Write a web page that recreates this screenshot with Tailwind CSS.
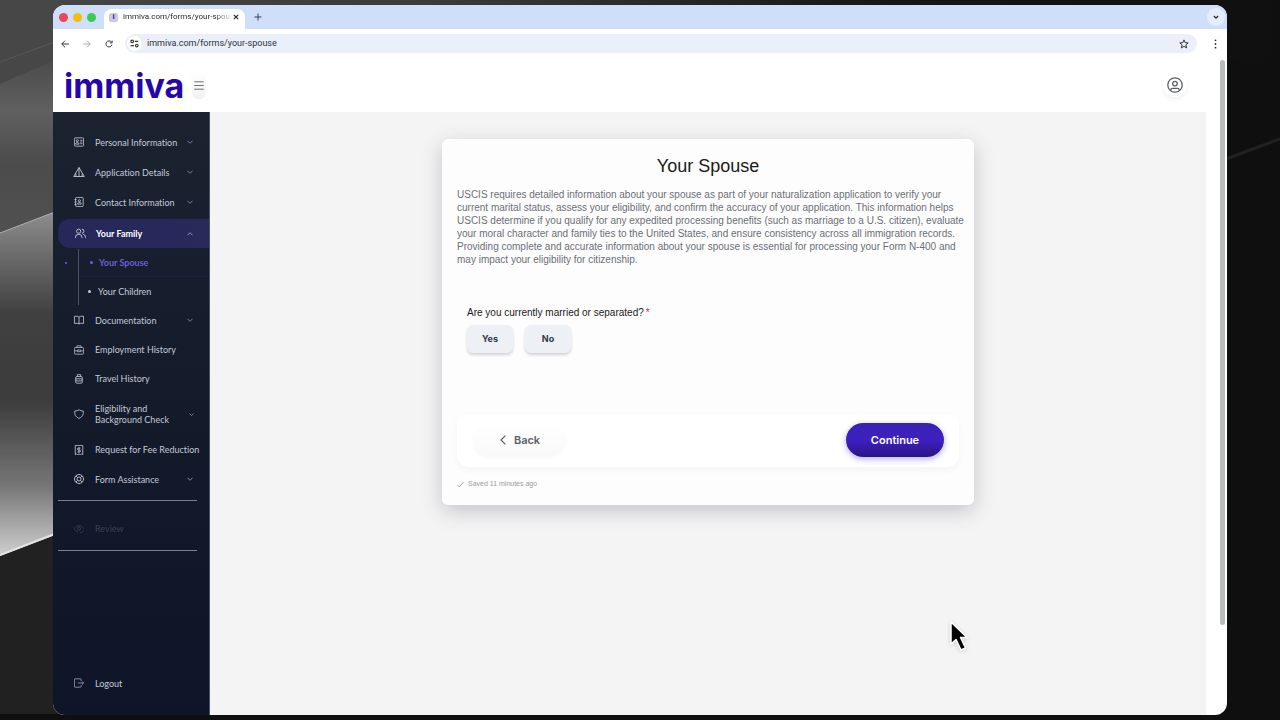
<!DOCTYPE html>
<html lang="en">
<head>
  <meta charset="UTF-8" />
  <meta name="viewport" content="width=device-width, initial-scale=1.0">
  <title>Your Spouse - immiva</title>
  <script src="https://cdn.jsdelivr.net/npm/@tailwindcss/browser@4"></script>
</head>
<body class="relative flex min-h-screen bg-[#0f0f0f] px-[53px] py-[5px] font-['Liberation_Sans',sans-serif]">
  <!-- Desktop wallpaper -->
  <svg class="absolute inset-0 h-full w-full" viewBox="0 0 1280 720" preserveAspectRatio="none" aria-hidden="true">
    <defs>
      <linearGradient id="wallTop" x1="0" y1="0" x2="1" y2="0">
        <stop offset="0" stop-color="#474747" />
        <stop offset="0.35" stop-color="#3a3a3a" />
        <stop offset="0.7" stop-color="#161616" />
        <stop offset="1" stop-color="#0f0f0f" />
      </linearGradient>
      <linearGradient id="wallUpper" x1="0" y1="0" x2="0" y2="1">
        <stop offset="0" stop-color="#4a4a4a" />
        <stop offset="0.3" stop-color="#606060" />
        <stop offset="0.6" stop-color="#4c4c4c" />
        <stop offset="1" stop-color="#505050" />
      </linearGradient>
      <linearGradient id="wallFold" x1="0" y1="0" x2="0" y2="1">
        <stop offset="0" stop-color="#8f8f8f" />
        <stop offset="0.12" stop-color="#6e6e6e" />
        <stop offset="0.3" stop-color="#404040" />
        <stop offset="0.55" stop-color="#3c3c3c" />
        <stop offset="0.8" stop-color="#777777" />
        <stop offset="1" stop-color="#cfcfcf" />
      </linearGradient>
    </defs>
    <rect width="1280" height="60" fill="url(#wallTop)" />
    <rect width="60" height="714" fill="#212121" />
    <path d="M0 0H60V60L0 85Z" fill="#474747" />
    <path d="M0 84L60 58V215L0 234Z" fill="url(#wallUpper)" />
    <path d="M0 233L60 210V533L0 556Z" fill="url(#wallFold)" />
    <path d="M0 62L60 40" stroke="#585858" stroke-width="1" />
    <path d="M0 233L60 210" stroke="#b0b0b0" stroke-width="1" />
    <path d="M0 555L60 532" stroke="#e4e4e4" stroke-width="2" />
    <path d="M1226 159L1280 139" stroke="#212121" stroke-width="3" />
  </svg>

  <!-- Browser window -->
  <div class="relative flex min-w-0 flex-1 flex-col overflow-hidden rounded-xl bg-white">
    <!-- Tab strip -->
    <div class="flex h-6 items-end bg-[#d0dff9] pr-[2px] pl-[6px]">
      <div class="flex h-6 items-center gap-[5px]">
        <span class="size-[9px] rounded-full bg-[#e8475c]"></span>
        <span class="size-[9px] rounded-full bg-[#f4bd12]"></span>
        <span class="size-[9px] rounded-full bg-[#3cc95a]"></span>
      </div>
      <div class="ml-2 flex h-5 w-[141px] items-center rounded-t-lg bg-white pr-[3px] pb-1 pl-[5px]">
        <span class="flex size-[9px] shrink-0 items-center justify-center rounded-xs bg-[#cfc4ee] text-[8px] font-bold text-[#2b1670]">i</span>
        <span class="ml-[5px] bg-linear-to-r from-[#222222] from-85% to-[#222222]/20 bg-clip-text font-['Roboto',sans-serif] text-[8px] whitespace-nowrap text-transparent">immiva.com/forms/your-spou</span>
        <button class="ml-auto flex size-3 items-center justify-center" aria-label="Close tab">
          <svg class="size-[6px]" viewBox="0 0 6 6" stroke="#222222" stroke-width="1.1"><path d="M.8 .8l4.400 4.400M5.200 .8L.8 5.200" /></svg>
        </button>
      </div>
      <button class="ml-[5px] flex h-6 w-4 items-center justify-center" aria-label="New tab">
        <svg class="size-2" viewBox="0 0 8 8" stroke="#33415c" stroke-width="1"><path d="M4 .5v7M.5 4h7" /></svg>
      </button>
      <button class="mb-[3px] ml-auto flex size-[18px] items-center justify-center rounded-full bg-[#e4edfd]" aria-label="Search tabs">
        <svg class="size-[6px]" viewBox="0 0 6 6" fill="none" stroke="#222222" stroke-width="1.2"><path d="M.8 2L3 4.200 5.200 2" /></svg>
      </button>
    </div>

    <!-- Address bar -->
    <div class="flex h-[29px] items-center pr-[6px] pl-[6px]">
      <button class="flex size-3 items-center justify-center" aria-label="Back">
        <svg class="size-2" viewBox="0 0 8 8" fill="none" stroke="#333333" stroke-width="1"><path d="M7.800 4H.9M4 .7L.7 4 4 7.300" /></svg>
      </button>
      <button class="ml-[10px] flex size-3 items-center justify-center" aria-label="Forward">
        <svg class="size-2" viewBox="0 0 8 8" fill="none" stroke="#aaaaaa" stroke-width="1"><path d="M.2 4h6.900M4 .7L7.300 4 4 7.300" /></svg>
      </button>
      <button class="ml-[10px] flex size-3 items-center justify-center" aria-label="Reload">
        <svg class="size-2" viewBox="0 0 9 9" fill="none" stroke="#333333" stroke-width="1.1"><path d="M7.800 5.200A3.400 3.400 0 1 1 7.300 2.500" /><path d="M8 .6v2.600H5.400" /></svg>
      </button>
      <div class="ml-[10px] flex h-[19px] flex-1 items-center rounded-full bg-[#eaeff9] pr-2 pl-[2px]">
        <span class="flex size-[15px] shrink-0 items-center justify-center rounded-full bg-white">
          <svg class="size-[9px]" viewBox="0 0 9 9" fill="none" stroke="#333333" stroke-width="1.1"><circle cx="2.200" cy="2.400" r="1.300" /><path d="M4.800 2.400h3.400M.6 6.600H4" /><circle cx="6.800" cy="6.600" r="1.300" /></svg>
        </span>
        <input type="text" aria-label="Address" value="immiva.com/forms/your-spouse" class="ml-[5px] min-w-0 flex-1 bg-transparent font-['Roboto',sans-serif] text-[9px] text-[#2e3138] outline-none">
        <button aria-label="Bookmark this page">
          <svg class="size-[10px]" viewBox="0 0 10 10" fill="none" stroke="#333333" stroke-width="1" stroke-linejoin="round"><path d="M5 .9l1.200 2.800 3 .2-2.300 2 .7 3L5 7.300 2.400 8.900l.7-3-2.300-2 3-.2z" /></svg>
        </button>
      </div>
      <button class="ml-3 flex h-4 w-3 items-center justify-center" aria-label="Browser menu">
        <svg class="h-[10px] w-[3px]" viewBox="0 0 3 10" fill="#333333"><circle cx="1.500" cy="1.300" r=".9" /><circle cx="1.500" cy="5" r=".9" /><circle cx="1.500" cy="8.700" r=".9" /></svg>
      </button>
    </div>

    <!-- Page -->
    <div class="relative flex flex-1 flex-col">
      <header class="flex h-[54px] items-center pr-10 pl-[11px]">
        <a href="#" class="w-[122px] pt-[2px] font-['Inter',sans-serif] text-[34px] leading-[52px] font-bold text-[#2406ac]">immiva</a>
        <button class="ml-[6px] flex h-7 w-[14px] items-center justify-center rounded-md bg-linear-to-b from-white to-[#f1f1f1]" aria-label="Toggle menu">
          <svg class="h-[9px] w-[10px]" viewBox="0 0 10 9" stroke="#6b6f6b" stroke-width="1"><path d="M.3 .8h9.400M.3 4.500h9.400M.3 8.200h9.400" /></svg>
        </button>
        <button class="ml-auto flex size-6 items-center justify-center rounded-full shadow-[0_3px_4px_rgba(0,0,0,0.05)]" aria-label="Account">
          <svg class="size-4" viewBox="0 0 16 16" fill="none" stroke="#5c5f66" stroke-width="1.300"><circle cx="8" cy="8" r="7.200" /><circle cx="8" cy="6.600" r="2.300" /><path d="M3.800 13.600v-.8a1.600 1.600 0 0 1 1.600-1.500h5.200a1.600 1.600 0 0 1 1.600 1.500v.8" /></svg>
        </button>
      </header>

      <div class="flex flex-1">
        <!-- Sidebar -->
        <aside class="flex w-[157px] shrink-0 flex-col border-r border-[#4a5064] bg-linear-to-b from-[#1b2331] via-[#131a2a] to-[#0f1528] pt-[15px] pb-[17px] font-['Lato',sans-serif] text-[9px] leading-[11px] text-[#c3c9d8] [font-variant-ligatures:none]">
          <nav class="flex flex-col" aria-label="Form sections">
            <button class="flex h-[30px] items-center pr-4 pl-[21px] text-left">
              <svg class="mr-[11px] size-[10px] shrink-0" viewBox="0 0 24 24" fill="none" stroke="currentColor" stroke-width="2"><rect x="1" y="2" width="22" height="20" rx="2" /><circle cx="8" cy="9" r="2.500" /><path d="M4 17c0-5 8-5 8 0zM15 8h5M15 12h5M15 16h5" /></svg>
              <span class="flex-1 whitespace-nowrap">Personal Information</span>
              <svg class="size-[6px] shrink-0" viewBox="0 0 6 6" fill="none" stroke="#8f97aa" stroke-width=".8"><path d="M.4 1.700L3 4.300l2.600-2.600" /></svg>
            </button>
            <button class="flex h-[30px] items-center pr-4 pl-[20px] text-left">
              <svg class="mr-[10px] size-3 shrink-0" viewBox="0 0 24 24" fill="none" stroke="currentColor" stroke-width="1.800" stroke-linejoin="round"><path d="M12 3L1.500 21h21zM12 3v18M6 21l-.5-6M18 21l.5-6" /></svg>
              <span class="flex-1 whitespace-nowrap">Application Details</span>
              <svg class="size-[6px] shrink-0" viewBox="0 0 6 6" fill="none" stroke="#8f97aa" stroke-width=".8"><path d="M.4 1.700L3 4.300l2.600-2.600" /></svg>
            </button>
            <button class="flex h-[30px] items-center pr-4 pl-[21px] text-left">
              <svg class="mr-[11px] size-[10px] shrink-0" viewBox="0 0 24 24" fill="none" stroke="currentColor" stroke-width="2"><rect x="4" y="1" width="18" height="22" rx="2" /><path d="M1 6h5M1 12h5M1 18h5" /><circle cx="13" cy="9" r="2.500" /><path d="M8.500 17c0-5 9-5 9 0z" /></svg>
              <span class="flex-1 whitespace-nowrap">Contact Information</span>
              <svg class="size-[6px] shrink-0" viewBox="0 0 6 6" fill="none" stroke="#8f97aa" stroke-width=".8"><path d="M.4 1.700L3 4.300l2.600-2.600" /></svg>
            </button>

            <!-- Open section -->
            <button class="mt-[2px] ml-[5px] flex h-[29px] items-center rounded-l-xl bg-linear-to-r from-[#26285a] to-[#29295a] pr-4 pl-[17px] text-left font-bold text-white">
              <svg class="mr-[10px] size-[11px] shrink-0" viewBox="0 0 24 24" fill="none" stroke="#c3c9d8" stroke-width="2"><circle cx="8" cy="7" r="4.500" /><path d="M1 22v-2a6 6 0 0 1 6-6h2a6 6 0 0 1 6 6v2M15 2.500a4.500 4.500 0 0 1 0 9M18 14a6 6 0 0 1 5 6v2" /></svg>
              <span class="flex-1 whitespace-nowrap">Your Family</span>
              <svg class="size-[6px] shrink-0" viewBox="0 0 6 6" fill="none" stroke="#a9afc4" stroke-width=".8"><path d="M.4 4.300L3 1.700l2.600 2.600" /></svg>
            </button>
            <div class="flex pt-[1px]">
              <div class="flex h-7 w-[25px] items-center pl-3"><span class="size-[2px] rounded-full bg-[#6f63e6]"></span></div>
              <ul class="flex-1 border-l border-[#4b5163]">
                <li>
                  <a href="#" class="flex h-7 items-center border-b border-[#1a1d44] pl-[11px] font-bold text-[#6a5fd6]">
                    <span class="mr-[6px] size-[3px] rounded-full bg-[#6a5fd6]"></span>Your Spouse
                  </a>
                </li>
                <li>
                  <a href="#" class="flex h-7 items-center pl-[9px]">
                    <span class="mr-[7px] size-[3px] rounded-full bg-[#c3c9d8]"></span>Your Children
                  </a>
                </li>
              </ul>
            </div>

            <button class="flex h-[30px] items-center pr-4 pl-[21px] text-left">
              <svg class="mr-[11px] size-[10px] shrink-0" viewBox="0 0 24 24" fill="none" stroke="currentColor" stroke-width="2" stroke-linejoin="round"><path d="M1 3h7a4 4 0 0 1 4 3 4 4 0 0 1 4-3h7v17h-8a3 3 0 0 0-3 2 3 3 0 0 0-3-2H1zM12 6v16" /></svg>
              <span class="flex-1 whitespace-nowrap">Documentation</span>
              <svg class="size-[6px] shrink-0" viewBox="0 0 6 6" fill="none" stroke="#8f97aa" stroke-width=".8"><path d="M.4 1.700L3 4.300l2.600-2.600" /></svg>
            </button>
            <a href="#" class="flex h-[29px] items-center pl-[21px]">
              <svg class="mr-[11px] size-[10px] shrink-0" viewBox="0 0 24 24" fill="none" stroke="currentColor" stroke-width="1.800"><rect x="1" y="6" width="22" height="16" rx="2" /><path d="M7 6V2h10v4M1 14h7M16 14h7M8 12h8v4H8z" /></svg>
              <span class="whitespace-nowrap">Employment History</span>
            </a>
            <a href="#" class="flex h-[29px] items-center pl-[21px]">
              <svg class="mr-[11px] size-[10px] shrink-0" viewBox="0 0 24 24" fill="none" stroke="currentColor" stroke-width="2"><rect x="4" y="6" width="16" height="16" rx="3" /><path d="M8 6V1.500h8V6M4 11.500h16M4 16.500h16" /></svg>
              <span class="whitespace-nowrap">Travel History</span>
            </a>
            <button class="flex h-[42px] items-center pr-[15px] pl-[21px] text-left">
              <svg class="mr-[11px] size-[10px] shrink-0" viewBox="0 0 24 24" fill="none" stroke="currentColor" stroke-width="2" stroke-linejoin="round"><path d="M12 1.500c3 2.500 6 3.300 10 3.300 1.500 7-1 14-10 17.700C3 18.800.5 11.800 2 4.800c4 0 7-.8 10-3.300z" /></svg>
              <span class="flex-1">Eligibility and<br>Background Check</span>
              <svg class="size-[5px] shrink-0" viewBox="0 0 6 6" fill="none" stroke="#8f97aa" stroke-width=".9"><path d="M.4 1.700L3 4.300l2.600-2.600" /></svg>
            </button>
            <a href="#" class="flex h-[29px] items-center pl-[21px]">
              <svg class="mr-[11px] size-[10px] shrink-0" viewBox="0 0 24 24" fill="none" stroke="currentColor" stroke-width="2"><path d="M3 1h18v22l-3-1.500-3 1.500-3-1.500L9 23l-3-1.500L3 23z" /><path d="M15.500 7.500h-5a2 2 0 0 0 0 4.500h3a2 2 0 0 1 0 4.500h-5M12 5v14" /></svg>
              <span class="whitespace-nowrap">Request for Fee Reduction</span>
            </a>
            <button class="flex h-[30px] items-center pr-4 pl-[21px] text-left">
              <svg class="mr-[11px] size-[10px] shrink-0" viewBox="0 0 24 24" fill="none" stroke="currentColor" stroke-width="2.200"><circle cx="12" cy="12" r="10.800" /><circle cx="12" cy="12" r="4.800" /><path d="M4.500 4.500l4 4M15.500 15.500l4 4M19.500 4.500l-4 4M8.500 15.500l-4 4" /></svg>
              <span class="flex-1 whitespace-nowrap">Form Assistance</span>
              <svg class="size-[6px] shrink-0" viewBox="0 0 6 6" fill="none" stroke="#a9afc4" stroke-width=".8"><path d="M.4 1.700L3 4.300l2.600-2.600" /></svg>
            </button>
            <div class="mt-[6px] mr-3 ml-[5px] flex items-center border-y border-[#7a8090] pt-[22px] pb-4 pl-[16px] text-[#3a4150]">
              <svg class="mr-[11px] size-[10px] shrink-0" viewBox="0 0 24 24" fill="none" stroke="currentColor" stroke-width="2"><path d="M10 19C6 18 3 15 1 11c5-9 17-9 22 0" /><circle cx="12" cy="11" r="3.500" /><path d="M14 19l3 3 6-6" /></svg>
              <span>Review</span>
            </div>
          </nav>
          <a href="#" class="mt-auto flex h-[30px] items-center pl-[21px]">
            <svg class="mr-[11px] size-[10px] shrink-0" viewBox="0 0 24 24" fill="none" stroke="#9aa1b3" stroke-width="2"><path d="M17 7V3a1 1 0 0 0-1-1H2a1 1 0 0 0-1 1v18a1 1 0 0 0 1 1h14a1 1 0 0 0 1-1v-4M9 12h14M19 8l4 4-4 4" /></svg>
            <span>Logout</span>
          </a>
        </aside>

        <!-- Form card -->
        <main class="mr-[21px] flex-1 bg-[#f4f4f4] px-6 pt-[27px] pb-6">
          <form class="mx-auto flex max-w-[532px] flex-col rounded-md bg-[#fdfdfd] px-[15px] pt-[15px] pb-[15px] shadow-[0_6px_20px_rgba(60,60,90,0.26)]">
            <h1 class="text-center text-[18px] leading-6 text-[#1a1a1a]">Your Spouse</h1>
            <p class="mt-[10px] -mr-3 text-[10px] leading-[13px] text-[#6b6f76]">USCIS requires detailed information about your spouse as part of your naturalization application to verify your current marital status, assess your eligibility, and confirm the accuracy of your application. This information helps USCIS determine if you qualify for any expedited processing benefits (such as marriage to a U.S. citizen), evaluate your moral character and family ties to the United States, and ensure consistency across all immigration records. Providing complete and accurate information about your spouse is essential for processing your Form N-400 and may impact your eligibility for citizenship.</p>
            <fieldset class="mt-10 px-[10px]">
              <legend class="text-[10px] leading-[14px] text-[#1a1a1a]">Are you currently married or separated?<span class="ml-[2px] text-[#dc2640]">*</span></legend>
              <div class="mt-[5px] flex gap-3 font-['Inter',sans-serif] text-[9px] font-bold text-[#343a46]">
                <button type="button" class="h-7 w-[46px] rounded-md bg-[#edf0f5] shadow-[0_2px_3px_rgba(40,50,70,0.2)]">Yes</button>
                <button type="button" class="h-7 w-[46px] rounded-md bg-[#edf0f5] shadow-[0_2px_3px_rgba(40,50,70,0.2)]">No</button>
              </div>
            </fieldset>
            <div class="mt-[61px] flex items-center justify-between rounded-xl bg-white pt-[9px] pb-[10px] pr-[15px] pl-[15px] font-['Inter',sans-serif] text-[11px] shadow-[0_3px_8px_rgba(0,0,0,0.04)]">
              <button type="button" class="flex h-[34px] w-[94px] items-center justify-center gap-2 rounded-full bg-linear-to-b from-white to-[#f9f9f9] pl-[2px] font-semibold text-[#5d6168] shadow-[0_2px_3px_rgba(0,0,0,0.02)]">
                <svg class="h-[10px] w-[6px]" viewBox="0 0 6 10" fill="none" stroke="currentColor" stroke-width="1.200"><path d="M5.400 .6L1 5l4.400 4.400" /></svg>
                Back
              </button>
              <button type="submit" class="h-[34px] w-[98px] rounded-full bg-linear-to-b from-[#3a22b4] via-[#3d20c0] to-[#2c1487] font-semibold text-white shadow-[0_2px_6px_rgba(70,40,220,0.4)]">Continue</button>
            </div>
            <p class="mt-[11px] flex items-center gap-[4px] text-[7px] leading-3 text-[#9b9b9b]">
              <svg class="size-[7px]" viewBox="0 0 7 7" fill="none" stroke="currentColor" stroke-width=".9"><path d="M.5 4l1.800 1.900L6.500 .9" /></svg>
              Saved 11 minutes ago
            </p>
          </form>
        </main>
      </div>

      <!-- Scrollbar thumb -->
      <div class="absolute top-[2px] right-[2px] h-[86%] w-[5px] rounded-full bg-[#b9bbbd]"></div>
    </div>
  </div>

  <!-- Mouse pointer -->
  <svg class="absolute top-[618px] left-[947px] h-9 w-6 drop-shadow-sm" viewBox="0 0 24 36" aria-hidden="true">
    <path d="M4 4V26L9 21.500L14 32L18.500 30L13.500 19.500H20Z" fill="#000000" stroke="#ffffff" stroke-width="1.500" stroke-linejoin="round" />
  </svg>
</body>
</html>
